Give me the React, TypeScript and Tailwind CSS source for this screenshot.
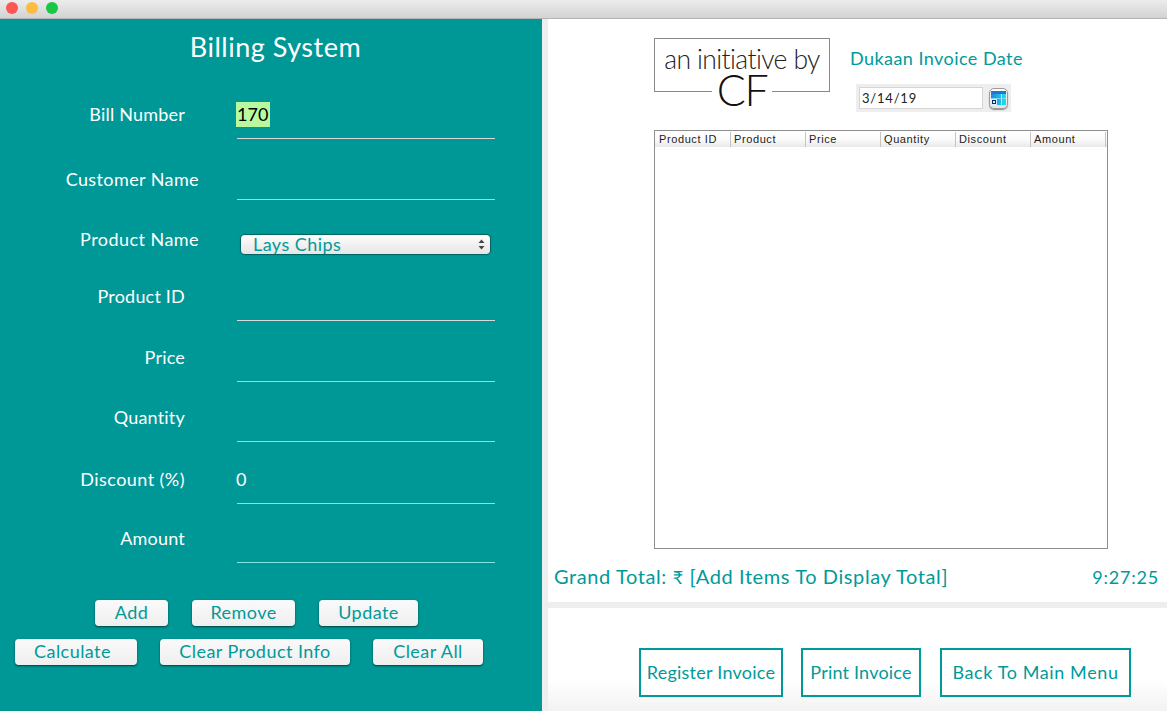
const font = { fontFamily: "Lato, 'Open Sans', sans-serif" };

interface FieldProps {
  label: string;
  value?: React.ReactNode;
  rowClass: string;
  labelClass?: string;
  lineClass?: string;
}

function Field({ label, value, rowClass, labelClass = "pr-[14px] pb-[13px] tracking-[0.2px]", lineClass = "border-[#7fe6e0]" }: FieldProps) {
  return (
    <div className={`flex items-end ${rowClass}`}>
      <div className={`w-[199px] text-right text-white text-[18px] leading-6 ${labelClass}`}>{label}</div>
      <div className={`ml-[38px] w-[258px] border-b text-white text-[18px] leading-6 h-[37px] ${lineClass}`}>{value}</div>
    </div>
  );
}

function GreyButton({ children, className }: { children: React.ReactNode; className: string }) {
  return (
    <button
      type="button"
      className={`h-[26px] pb-[2px] rounded-[4px] bg-gradient-to-b from-[#fafafa] to-[#efefef] text-[#009a9a] text-[18px] leading-6 tracking-[0.45px] shadow-[0_1px_2px_rgba(0,40,40,0.8)] ${className}`}
    >
      {children}
    </button>
  );
}

function OutlineButton({ children, className }: { children: React.ReactNode; className: string }) {
  return (
    <button
      type="button"
      className={`h-[49px] border-2 border-[#009a9a] bg-white text-[#009a9a] text-[18px] ${className}`}
    >
      {children}
    </button>
  );
}

const columns = ["Product ID", "Product", "Price", "Quantity", "Discount", "Amount"];

export default function App() {
  return (
    <div className="w-[1167px] h-[711px] overflow-hidden flex flex-col bg-white" style={font}>
      <div className="h-[19px] shrink-0 flex items-center gap-[8px] pl-[6px] pb-[2px] bg-gradient-to-b from-[#ececec] to-[#d3d3d3] border-b border-[#b4b4b4]">
        <span className="w-[12px] h-[12px] rounded-full bg-[#fc5753]" />
        <span className="w-[12px] h-[12px] rounded-full bg-[#fdbc40]" />
        <span className="w-[12px] h-[12px] rounded-full bg-[#19c645]" />
      </div>

      <div className="flex flex-1 min-h-0">
        {/* left form panel */}
        <div className="w-[542px] shrink-0 bg-[#009797]">
          <div className="h-[46px] flex items-end justify-center pl-[9px]">
            <h1 className="text-white text-[27px] leading-[36px] tracking-[0.5px]">Billing System</h1>
          </div>
          <Field
            label="Bill Number"
            rowClass="h-[74px]"
            lineClass="border-[#d9d9d9]"
            value={<span className="inline-block -ml-px bg-[#b8f99f] text-black pl-[1px] pr-[2px] leading-[25px]">170</span>}
          />
          <Field label="Customer Name" rowClass="h-[61px]" labelClass="pb-[9px] tracking-[0.4px]" />
          <div className="h-[60px] flex items-start">
            <div className="w-[199px] text-right text-white text-[18px] leading-6 tracking-[0.45px] mt-[27px]">Product Name</div>
            <div className="ml-[42px] mt-[35px] w-[249px] h-[19px] rounded-[4px] bg-gradient-to-b from-[#ffffff] via-[#f1f1f1] to-[#e6e6e6] shadow-[0_0_1px_1px_rgba(0,60,60,0.6)] flex items-center pl-[12px] pr-[5px]">
              <span className="flex-1 text-[#009a9a] text-[18px] leading-5 tracking-[0.45px] pb-[1px]">Lays Chips</span>
              <svg width="7" height="11" viewBox="0 0 7 11" className="text-[#444]">
                <path d="M3.5 0.5 L6.5 4 H0.5 Z M3.5 10.5 L6.5 7 H0.5 Z" fill="currentColor" />
              </svg>
            </div>
          </div>
          <Field label="Product ID" rowClass="h-[61px]" lineClass="border-[#d9d9d9]" />
          <Field label="Price" rowClass="h-[61px]" />
          <Field label="Quantity" rowClass="h-[60px]" />
          <Field label="Discount (%)" rowClass="h-[62px]" labelClass="pr-[14px] pb-[13px] tracking-[0.45px]" value={<span className="-ml-px">0</span>} />
          <Field label="Amount" rowClass="h-[59px]" />

          <div className="mt-[37px] ml-[95px] flex gap-[24px]">
            <GreyButton className="w-[73px]">Add</GreyButton>
            <GreyButton className="w-[103px]">Remove</GreyButton>
            <GreyButton className="w-[99px]">Update</GreyButton>
          </div>
          <div className="mt-[13px] ml-[15px] flex gap-[23px]">
            <GreyButton className="w-[122px] pr-[7px]">Calculate</GreyButton>
            <GreyButton className="w-[190px]">Clear Product Info</GreyButton>
            <GreyButton className="w-[110px]">Clear All</GreyButton>
          </div>
        </div>

        <div className="w-[6px] shrink-0 bg-[#eeeeee]" />

        {/* right invoice panel */}
        <div className="flex-1 min-w-0 flex flex-col">
          <div className="h-[583px] shrink-0 flex flex-col pl-[106px]">
            <div className="flex h-[111px] pt-[19px]">
              <div className="w-[176px] h-[54px] border border-[#8a8a8a] flex flex-col items-center">
                <span className="text-[#222] text-[26.5px] leading-[28px] font-light tracking-[-0.6px] mt-[6px]">an initiative by</span>
                <span className="bg-white px-[5px] text-[#111] text-[43px] leading-[34px] font-light tracking-[-1.5px]">CF</span>
              </div>
              <div className="ml-[20px]">
                <div className="text-[#009a9a] text-[18px] leading-6 tracking-[0.45px] mt-[8px]">Dukaan Invoice Date</div>
                <div className="ml-[6px] mt-[14px] w-[155px] h-[28px] bg-[#eeeeee] flex items-center pl-[3px]">
                  <div className="w-[124px] h-[22px] bg-white border border-[#d5d5d5] pl-[2px] text-[13px] leading-5 tracking-[0.8px] text-[#222]">3/14/19</div>
                  <div className="ml-[6px] w-[19px] h-[21px] rounded-[5px] bg-gradient-to-b from-white to-[#e4e4e4] border border-[#9a9a9a] shadow-[0_1px_1px_rgba(0,0,0,0.4)] flex items-center justify-center">
                    <svg width="15" height="14" viewBox="0 0 15 14">
                      <defs>
                        <linearGradient id="calendarFill" x1="0" x2="1" y1="0" y2="0">
                          <stop offset="0" stopColor="#2f7fe0" />
                          <stop offset="1" stopColor="#12e6ee" />
                        </linearGradient>
                      </defs>
                      <rect width="15" height="14" fill="url(#calendarFill)" />
                      <rect width="15" height="3" fill="#1f78c8" />
                      <rect x="10" y="3" width="1" height="11" fill="#a8f5ff" />
                      <rect y="7" width="15" height="1" fill="#7fd8f5" />
                      <rect x="0" y="8" width="6" height="6" fill="#d9f2ff" />
                      <rect x="1" y="9" width="4" height="4" fill="#0b2d6b" />
                      <rect x="2" y="10" width="2" height="2" fill="#d9f2ff" />
                    </svg>
                  </div>
                </div>
              </div>
            </div>

            <div className="w-[454px] h-[419px] border border-[#8e8e8e] pt-[1px]">
              <div className="flex h-[15px] bg-gradient-to-b from-[#ffffff] via-[#fbfbfb] to-[#e9e9e9] pl-[1px]">
                {columns.map((c) => (
                  <div key={c} className="w-[75px] pl-[3px] border-r border-[#c4c4c4] text-[11px] leading-[14px] tracking-[0.6px] text-[#222]" style={{ fontFamily: "'Liberation Sans', sans-serif" }}>
                    {c}
                  </div>
                ))}
              </div>
            </div>

            <div className="flex items-center -ml-[100px] mt-[13px] pr-[8px] text-[#009a9a] text-[20px] leading-7 tracking-[0.6px]">
              <span className="flex-1">
                Grand Total: <span className="text-[18px]">₹</span> [Add Items To Display Total]
              </span>
              <span className="text-[18px] tracking-[0.8px]">9:27:25</span>
            </div>
          </div>

          <div className="h-[6px] shrink-0 bg-[#eeeeee]" />

          <div className="flex-1 bg-gradient-to-b from-white from-[70%] to-[#f2f2f2] pt-[40px] pl-[91px] flex gap-[18px]">
            <OutlineButton className="w-[144px] tracking-[0.25px]">Register Invoice</OutlineButton>
            <OutlineButton className="w-[120px] tracking-[0.2px]">Print Invoice</OutlineButton>
            <OutlineButton className="w-[191px] ml-px tracking-[0.6px]">Back To Main Menu</OutlineButton>
          </div>
        </div>
      </div>
    </div>
  );
}
